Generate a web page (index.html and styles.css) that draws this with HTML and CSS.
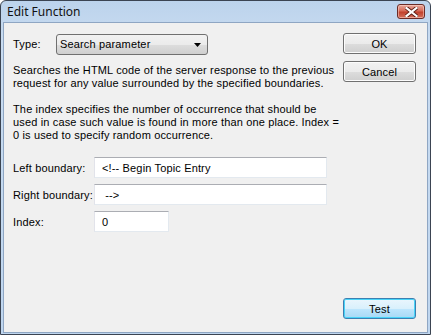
FILE: index.html
```html
<!DOCTYPE html>
<html>
<head>
<meta charset="utf-8">
<link rel="stylesheet" href="styles.css">
</head>
<body>
<div class="window">
  <div class="titlebar">
    <span class="title">Edit Function</span>
    <span class="close">
      <svg width="13" height="10" viewBox="0 0 13 10">
        <path d="M1.5 1 L11.5 9 M11.5 1 L1.5 9" stroke="#5a1d14" stroke-width="4" stroke-linecap="square"/>
        <path d="M1.5 1 L11.5 9 M11.5 1 L1.5 9" stroke="#ffffff" stroke-width="2.2" stroke-linecap="square"/>
      </svg>
    </span>
  </div>
  <div class="client">
    <div class="main">
      <div class="type-row">
        <span class="type-label">Type:</span>
        <div class="select">
          <span>Search parameter</span>
          <svg class="arrow" width="7" height="4" viewBox="0 0 7 4"><path d="M0 0 H7 L3.5 4 Z" fill="#000"/></svg>
        </div>
      </div>
      <p class="desc">Searches the HTML code of the server response to the previous request for any value surrounded by the specified boundaries.</p>
      <p class="desc second">The index specifies the number of occurrence that should be used in case such value is found in more than one place. Index = 0 is used to specify random occurrence.</p>
      <div class="fields">
        <label class="flabel">Left boundary:</label>
        <div class="input wide">&lt;!-- Begin Topic Entry</div>
        <label class="flabel">Right boundary:</label>
        <div class="input wide">&nbsp;--&gt;</div>
        <label class="flabel">Index:</label>
        <div class="input narrow">0</div>
      </div>
    </div>
    <div class="side">
      <div class="btn">OK</div>
      <div class="btn">Cancel</div>
      <div class="spacer"></div>
      <div class="btn default">Test</div>
    </div>
  </div>
</div>
</body>
</html>
```
FILE: styles.css
```css
html, body {
  margin: 0;
  padding: 0;
  background: #ffffff;
}
.window {
  width: 431px;
  height: 335px;
  box-sizing: border-box;
  border: 1px solid #3b4452;
  border-radius: 6px 6px 0 0;
  background: linear-gradient(#bcd3ec, #c9dcf1 40px, #bfd6ef);
  padding: 0 2px 1px 2px;
  display: flex;
  flex-direction: column;
  font-family: "Liberation Sans", Arial, sans-serif;
  font-size: 11px;
  letter-spacing: 0.15px;
  color: #000;
}
.titlebar {
  height: 21px;
  flex: none;
  display: flex;
  align-items: flex-start;
  justify-content: space-between;
}
.title {
  font-family: "Noto Sans", "Open Sans", sans-serif;
  font-size: 12px;
  letter-spacing: 0;
  margin: 3px 0 0 4px;
  line-height: 16px;
  color: #111;
}
.close {
  margin: 3px 3px 0 0;
  width: 26px;
  height: 13px;
  border: 1px solid #6b2b26;
  border-radius: 3px;
  background: linear-gradient(#e8a79b, #d66a57 45%, #c1412d 55%, #d4705c);
  display: flex;
  align-items: center;
  justify-content: center;
  box-shadow: inset 0 0 0 1px rgba(255, 220, 210, 0.5);
}
.client {
  flex: 1;
  background: #f0f0f0;
  border: 1px solid #8fa6c3;
  display: flex;
  padding: 10px 11px 13px 9px;
}
.main {
  flex: 1;
  display: flex;
  flex-direction: column;
}
.type-row {
  display: flex;
  align-items: center;
  height: 22px;
}
.type-label {
  width: 43px;
}
.select {
  width: 152px;
  height: 21px;
  box-sizing: border-box;
  border: 1px solid #707070;
  border-radius: 3px;
  background: linear-gradient(#f2f2f2, #ebebeb 50%, #dddddd 51%, #cfcfcf);
  display: flex;
  align-items: center;
  justify-content: space-between;
  padding: 0 6px 0 3px;
}
.arrow {
  margin-top: 1px;
}
.desc {
  margin: 9px 0 0 0;
  line-height: 13px;
  width: 330px;
}
.desc.second {
  margin-top: 13px;
}
.fields {
  margin-top: 15px;
  display: grid;
  grid-template-columns: 81px auto;
  row-gap: 6px;
  align-items: center;
}
.input {
  height: 21px;
  box-sizing: border-box;
  background: #fff;
  border: 1px solid #e3e9ef;
  border-top-color: #abadb3;
  border-left-color: #e2e3ea;
  padding: 0 0 0 7px;
  display: flex;
  align-items: center;
}
.wide {
  width: 233px;
}
.narrow {
  width: 75px;
}
.side {
  width: 73px;
  display: flex;
  flex-direction: column;
  gap: 7px;
}
.spacer {
  flex: 1;
}
.btn {
  height: 21px;
  box-sizing: border-box;
  border: 1px solid #707070;
  border-radius: 3px;
  background: linear-gradient(#f2f2f2, #ebebeb 50%, #dddddd 51%, #cfcfcf);
  box-shadow: inset 0 0 0 1px #fcfcfc;
  display: flex;
  align-items: center;
  justify-content: center;
}
.btn.default {
  border-color: #3c7fb1;
  background: linear-gradient(#eaf6fd, #d9f0fc 50%, #bee6fd 51%, #a7d9f5);
  box-shadow: inset 0 0 0 1px #48d4f8;
}
```
